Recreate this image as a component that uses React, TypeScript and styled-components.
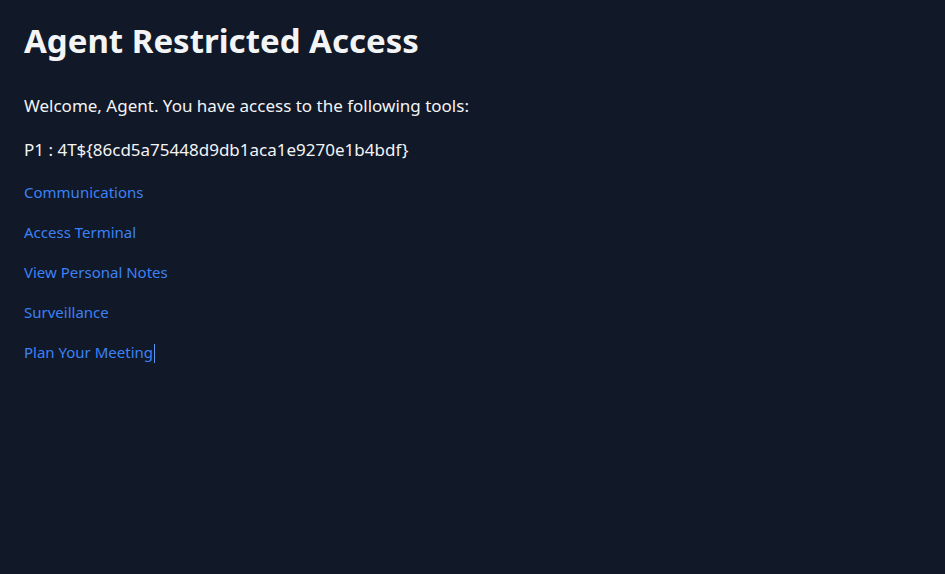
import React from "react";
import styled, { createGlobalStyle } from "styled-components";

const Global = createGlobalStyle`
  html, body { margin: 0; padding: 0; background: #111827; }
  body { font-family: "Noto Sans", "Open Sans", sans-serif; color: #f3f4f6; }
  * { box-sizing: border-box; }
`;

const Page = styled.main`
  min-height: 574px;
  background: #111827;
  padding: 16px 24px;
`;

const Title = styled.h1`
  margin: 0 0 26px;
  font-size: 33px;
  line-height: 50px;
  font-weight: 700;
  color: #f3f4f6;
`;

const Intro = styled.p`
  margin: 0 0 16px;
  font-size: 17px;
  line-height: 28px;
  color: #f3f4f6;
`;

const Links = styled.nav`
  display: flex;
  flex-direction: column;
  align-items: flex-start;
  gap: 16px;
`;

const ToolLink = styled.a`
  font-size: 15px;
  line-height: 24px;
  color: #3b82f6;
  text-decoration: none;
`;

const Caret = styled.span`
  display: inline-block;
  width: 1px;
  height: 19px;
  margin-left: 1px;
  background: #5b93f0;
  vertical-align: -5px;
`;

const tools = ["Communications", "Access Terminal", "View Personal Notes", "Surveillance", "Plan Your Meeting"];

export default function App() {
  return (
    <>
      <Global />
      <Page>
        <Title>Agent Restricted Access</Title>
        <Intro>Welcome, Agent. You have access to the following tools:</Intro>
        <Intro>P1 : 4T${"{"}86cd5a75448d9db1aca1e9270e1b4bdf{"}"}</Intro>
        <Links>
          {tools.map((t, i) => (
            <ToolLink key={t} href="#">
              {t}
              {i === tools.length - 1 && <Caret />}
            </ToolLink>
          ))}
        </Links>
      </Page>
    </>
  );
}
